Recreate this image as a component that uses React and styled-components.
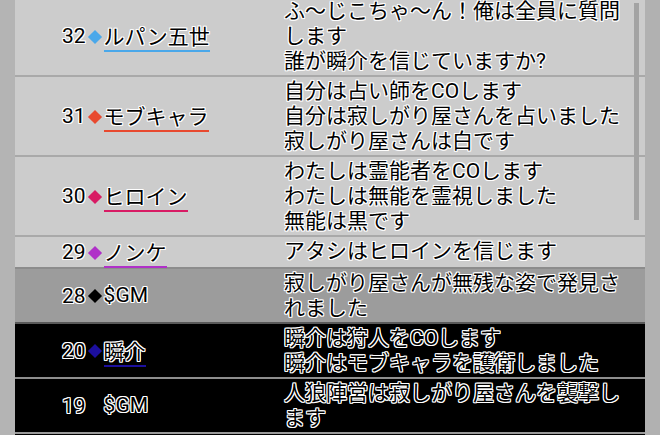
import React from "react";
import styled, { createGlobalStyle } from "styled-components";

const Global = createGlobalStyle`
  html, body { margin: 0; padding: 0; overflow: hidden; background: #b3b3b3; }
  body { width: 660px; height: 435px; }
`;

const Page = styled.div`
  display: flex;
  width: 660px;
  height: 435px;
  overflow: hidden;
  background: #b3b3b3;
  font-family: Roboto, "Noto Sans CJK JP", sans-serif;
`;

const Strip = styled.div`
  flex: 0 0 15px;
  background: ${(p) => p.$color};
`;

const Table = styled.div`
  position: relative;
  flex: 0 0 630px;
  display: flex;
  flex-direction: column;
  margin-top: -3px;
  background: #cccccc;
`;

const Row = styled.div`
  display: grid;
  grid-template-columns: 269px 1fr;
  background: ${(p) => p.$bg};
  border-bottom: 2px solid ${(p) => p.$line};
  padding: 2px 0 1px;
`;

const Filler = styled.div`
  flex: 1 0 20px;
  background: #000;
`;

const Outline = `
  color: #000;
  text-shadow:
    -1px -1px 0 #fff, 1px -1px 0 #fff, -1px 1px 0 #fff, 1px 1px 0 #fff,
    0 -1px 0 #fff, 0 1px 0 #fff, -1px 0 0 #fff, 1px 0 0 #fff;
`;

const NameCell = styled.div`
  display: flex;
  align-items: center;
  padding-left: 47px;
  font-size: 21px;
  line-height: 25px;
  ${Outline}
`;

const Num = styled.span`
  display: inline-block;
`;

const Mark = styled.span`
  flex: 0 0 18px;
  display: flex;
  align-items: center;
  justify-content: center;
  &::before {
    content: "";
    display: ${(p) => (p.$color ? "block" : "none")};
    width: 10px;
    height: 10px;
    background: ${(p) => p.$color};
    transform: rotate(45deg);
  }
`;

const Name = styled.span`
  display: inline-block;
  border-bottom: 2px solid ${(p) => p.$color || "transparent"};
  margin-bottom: ${(p) => (p.$color ? "-2px" : "0")};
  margin-top: ${(p) => (p.$color ? "2px" : "0")};
`;

const Message = styled.div`
  padding: 0 12px 0 0;
  font-size: 21px;
  line-height: 25px;
  white-space: pre-wrap;
  word-break: break-all;
  ${Outline}
`;

const Thumb = styled.div`
  position: absolute;
  left: 619px;
  top: 6px;
  width: 5px;
  height: 217px;
  background: #a3a3a3;
`;

const rows = [
  { n: "32", c: "#4aa8ea", name: "ルパン五世", u: true, bg: "#cccccc", line: "#a9a9a9",
    msg: "ふ〜じこちゃ〜ん！俺は全員に質問します\n誰が瞬介を信じていますか?" },
  { n: "31", c: "#e8492f", name: "モブキャラ", u: true, bg: "#cccccc", line: "#a9a9a9",
    msg: "自分は占い師をCOします\n自分は寂しがり屋さんを占いました\n寂しがり屋さんは白です" },
  { n: "30", c: "#d81b64", name: "ヒロイン", u: true, bg: "#cccccc", line: "#a9a9a9",
    msg: "わたしは霊能者をCOします\nわたしは無能を霊視しました\n無能は黒です" },
  { n: "29", c: "#b030c8", name: "ノンケ", u: true, bg: "#cccccc", line: "#8c8c8c",
    msg: "アタシはヒロインを信じます" },
  { n: "28", c: "#000000", name: "$GM", u: false, bg: "#9c9c9c", line: "#5a5a5a",
    msg: "寂しがり屋さんが無残な姿で発見されました" },
  { n: "20", c: "#1c0f9e", name: "瞬介", u: true, bg: "#000000", line: "#8e8e8e",
    msg: "瞬介は狩人をCOします\n瞬介はモブキャラを護衛しました" },
  { n: "19", c: null, name: "$GM", u: false, bg: "#000000", line: "#9a9a9a",
    msg: "人狼陣営は寂しがり屋さんを襲撃します" },
];

export default function App() {
  return (
    <>
      <Global />
      <Page>
        <Strip $color="#b4b4b4" />
        <Table>
          {rows.map((r) => (
            <Row key={r.n} $bg={r.bg} $line={r.line}>
              <NameCell>
                <Num>{r.n}</Num>
                <Mark $color={r.c} />
                <Name $color={r.u ? r.c : null}>{r.name}</Name>
              </NameCell>
              <Message>{r.msg}</Message>
            </Row>
          ))}
          <Filler />
          <Thumb />
        </Table>
        <Strip $color="#b1b1b1" />
      </Page>
    </>
  );
}
